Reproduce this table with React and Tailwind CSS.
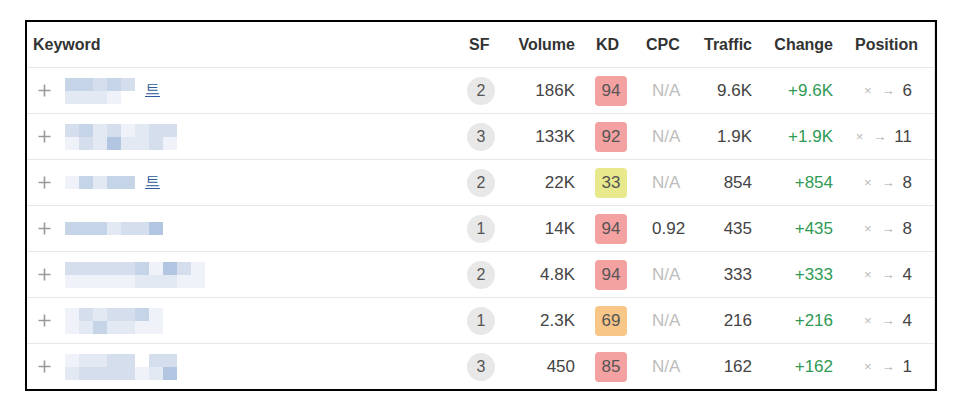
import React from "react";

const palette = {
  a: "bg-[#c6d4e8]",
  b: "bg-[#d5deed]",
  c: "bg-[#e3e9f3]",
  d: "bg-[#b2c6e1]",
  e: "bg-[#eff3f9]",
  w: "bg-transparent",
};

const rows = [
  { sf: 2, vol: "186K", kd: 94, cpc: "N/A", traffic: "9.6K", change: "+9.6K", pos: 6, mosaic: ["aabab", "ccce"], tail: "트" },
  { sf: 3, vol: "133K", kd: 92, cpc: "N/A", traffic: "1.9K", change: "+1.9K", pos: 11, mosaic: ["bacbecbb", "ebcdccbe"] },
  { sf: 2, vol: "22K", kd: 33, cpc: "N/A", traffic: "854", change: "+854", pos: 8, mosaic: ["eacaa"], tail: "트" },
  { sf: 1, vol: "14K", kd: 94, cpc: "0.92", traffic: "435", change: "+435", pos: 8, mosaic: ["aaacbbd"] },
  { sf: 2, vol: "4.8K", kd: 94, cpc: "N/A", traffic: "333", change: "+333", pos: 4, mosaic: ["bbbbbaedbe", "eeeeecccee"] },
  { sf: 1, vol: "2.3K", kd: 69, cpc: "N/A", traffic: "216", change: "+216", pos: 4, mosaic: ["ebcbbae", "ecaccee"] },
  { sf: 3, vol: "450", kd: 85, cpc: "N/A", traffic: "162", change: "+162", pos: 1, mosaic: ["eccbbwbb", "cbbbbecd"] },
];

const kdColor = (kd) => {
  if (kd >= 80) return "bg-[#f4a1a1]";
  if (kd >= 50) return "bg-[#f8c687]";
  return "bg-[#e8e88c]";
};

const cols = "grid grid-cols-[428px_50px_78px_57px_50px_70px_81px_94px]";

function Mosaic({ mosaic, tail }) {
  return (
    <div className="flex items-center">
      <div className="flex flex-col">
        {mosaic.map((line, i) => (
          <div key={i} className="flex">
            {line.split("").map((ch, j) => (
              <div key={j} className={`h-[13px] w-[14px] ${palette[ch]}`} />
            ))}
          </div>
        ))}
      </div>
      {tail && (
        <span className="ml-[10px] -mt-[4px] text-[15px] leading-none text-[#2d5b9c] underline underline-offset-2">
          {tail}
        </span>
      )}
    </div>
  );
}

function Plus() {
  return (
    <svg width="13" height="13" viewBox="0 0 13 13" className="shrink-0">
      <path d="M6.5 0.5v12M0.5 6.5h12" stroke="#9a9a9a" strokeWidth="1.6" />
    </svg>
  );
}

export default function App() {
  return (
    <div className="h-[410px] w-[954px] bg-white pl-[25px] pt-[20px] font-['Liberation_Sans',Arial,sans-serif]">
      <div className="w-[912px] border-2 border-black">
        <div className="border-r border-[#e4e4e4]">
          <div className={`${cols} h-[45px] items-center text-[16px] font-bold text-[#333]`}>
            <div className="pl-[6px]">Keyword</div>
            <div className="pl-[14px]">SF</div>
            <div className="pr-[8px] text-right">Volume</div>
            <div className="pl-[13px]">KD</div>
            <div className="pl-[6px]">CPC</div>
            <div className="pr-[8px] text-right">Traffic</div>
            <div className="pr-[8px] text-right">Change</div>
            <div className="pl-[14px]">Position</div>
          </div>
          {rows.map((r, i) => (
            <div
              key={i}
              className={`${cols} h-[46px] items-center border-t border-[#e8e8e8] text-[17px] text-[#444]`}
            >
              <div className="flex items-center pl-[11px]">
                <Plus />
                <div className="ml-[14px]">
                  <Mosaic mosaic={r.mosaic} tail={r.tail} />
                </div>
              </div>
              <div className="pl-[12px]">
                <div className="flex h-[28px] w-[28px] items-center justify-center rounded-full bg-[#e8e8e8] text-[16px] text-[#555]">
                  {r.sf}
                </div>
              </div>
              <div className="pr-[8px] text-right">{r.vol}</div>
              <div className="pl-[12px]">
                <div className={`flex h-[30px] w-[32px] items-center justify-center rounded-[4px] ${kdColor(r.kd)} text-[#555]`}>
                  {r.kd}
                </div>
              </div>
              <div className={`pl-[12px] ${r.cpc === "N/A" ? "text-[#bdbdbd]" : "text-[#444]"}`}>{r.cpc}</div>
              <div className="pr-[8px] text-right">{r.traffic}</div>
              <div className="pr-[8px] text-right text-[#2f9a54]">{r.change}</div>
              <div className="flex items-center justify-end pr-[23px]">
                <span className="mr-[10px] text-[13px] text-[#bbb]">×</span>
                <span className="mr-[8px] text-[13px] text-[#aaa]">→</span>
                <span>{r.pos}</span>
              </div>
            </div>
          ))}
        </div>
      </div>
    </div>
  );
}
